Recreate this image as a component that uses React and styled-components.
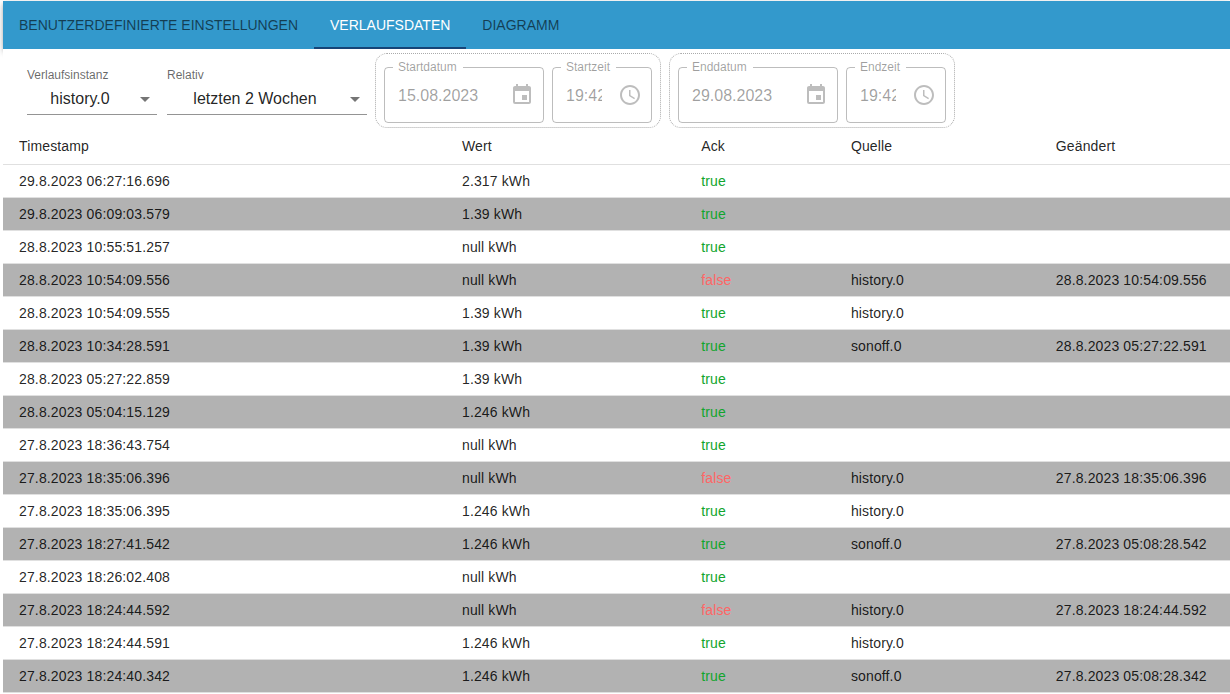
import React from 'react';
import styled, { createGlobalStyle } from 'styled-components';
import { MdAccessTime, MdArrowDropDown, MdEvent } from 'react-icons/md';

const GlobalStyle = createGlobalStyle`
    * {
        box-sizing: border-box;
    }

    body {
        margin: 0;
        background: white;
        color: rgba(0, 0, 0, 0.87);
        font-family: "Liberation Sans", Arial, sans-serif;
        font-size: 14px;
    }

    button,
    input,
    select {
        font-family: inherit;
    }
`;

const Page = styled.div`
    padding: 1px 0 0 3px;
    overflow: hidden;
`;

const TabBar = styled.nav`
    display: flex;
    height: 48px;
    background: #3399cc;
    box-shadow: 0 2px 4px -1px rgba(0, 0, 0, 0.2), 0 4px 5px 0 rgba(0, 0, 0, 0.14),
        0 1px 10px 0 rgba(0, 0, 0, 0.12);
`;

const Tab = styled.button`
    padding: 2px 16px 0;
    border: 0;
    border-bottom: 2px solid ${props => (props.$active ? '#164477' : 'transparent')};
    background: none;
    color: ${props => (props.$active ? 'white' : 'rgba(0, 0, 0, 0.6)')};
    font-size: 14px;
    line-height: 20px;
    text-transform: uppercase;
    white-space: nowrap;
    cursor: pointer;
`;

const Content = styled.main`
    position: relative;
    background: white;
`;

const Toolbar = styled.div`
    display: flex;
    flex-wrap: wrap;
    align-items: center;
    gap: 8px;
    padding: 4px 0 0 24px;
`;

const Selects = styled.div`
    display: flex;
    gap: 10px;
`;

const SelectControl = styled.div`
    width: ${props => props.$width}px;
`;

const SelectLabel = styled.label`
    display: block;
    color: rgba(0, 0, 0, 0.6);
    font-size: 12px;
    line-height: 16px;
`;

const SelectBox = styled.div`
    position: relative;

    svg {
        position: absolute;
        right: 0;
        top: 4px;
        color: rgba(0, 0, 0, 0.54);
        pointer-events: none;
    }
`;

const Select = styled.select`
    appearance: none;
    display: block;
    width: 100%;
    height: 32px;
    padding: 0 24px 0 0;
    border: 0;
    border-bottom: 1px solid rgba(0, 0, 0, 0.42);
    border-radius: 0;
    background: none;
    color: rgba(0, 0, 0, 0.87);
    font-size: 16px;
    text-align-last: center;
`;

const DateGroup = styled.div`
    display: flex;
    gap: 8px;
    padding: 13px 8px 4px;
    border: 1px dotted #aaaaaa;
    border-radius: 12px;
`;

const Field = styled.div`
    position: relative;
    display: flex;
    align-items: center;
    gap: 16px;
    width: ${props => props.$width}px;
    height: 56px;
    padding: 0 9px 0 13px;
    border: 1px solid rgba(0, 0, 0, 0.26);
    border-radius: 4px;
`;

const FieldLabel = styled.label`
    position: absolute;
    top: -9px;
    left: 8px;
    padding: 0 6px 0 5px;
    background: white;
    color: rgba(0, 0, 0, 0.38);
    font-size: 12px;
    line-height: 16px;
`;

const FieldInput = styled.input`
    flex: 1;
    min-width: 0;
    padding: 2px 0 0;
    border: 0;
    background: none;
    color: rgba(0, 0, 0, 0.38);
    font-size: 16px;
`;

const IconButton = styled.button`
    display: flex;
    padding: 0;
    border: 0;
    background: none;
    color: rgba(0, 0, 0, 0.26);
`;

const Table = styled.table`
    width: 100%;
    table-layout: fixed;
    border-collapse: separate;
    border-spacing: 0;
    letter-spacing: 0.01em;
`;

const HeadCell = styled.th`
    width: ${props => props.$width};
    padding: 6px 16px;
    border-bottom: 1px solid #e0e0e0;
    font-weight: normal;
    line-height: 24px;
    text-align: left;
`;

const Row = styled.tr`
    &:nth-child(even) {
        background: #b2b2b2;
    }
`;

const Cell = styled.td`
    padding: 6px 16px;
    border-bottom: 1px solid #e0e0e0;
    color: ${props => props.$color || 'inherit'};
    line-height: 20px;
    white-space: nowrap;
`;

const tabs = ['Benutzerdefinierte Einstellungen', 'Verlaufsdaten', 'Diagramm'];

const columns = [
    { title: 'Timestamp', width: '36.1%' },
    { title: 'Wert', width: '19.5%' },
    { title: 'Ack', width: '12.2%' },
    { title: 'Quelle', width: '16.7%' },
    { title: 'Geändert', width: '15.5%' },
];

const rows = [
    { ts: '29.8.2023 06:27:16.696', val: '2.317', ack: true },
    { ts: '29.8.2023 06:09:03.579', val: '1.39', ack: true },
    { ts: '28.8.2023 10:55:51.257', val: 'null', ack: true },
    { ts: '28.8.2023 10:54:09.556', val: 'null', ack: false, from: 'history.0', lc: '28.8.2023 10:54:09.556' },
    { ts: '28.8.2023 10:54:09.555', val: '1.39', ack: true, from: 'history.0' },
    { ts: '28.8.2023 10:34:28.591', val: '1.39', ack: true, from: 'sonoff.0', lc: '28.8.2023 05:27:22.591' },
    { ts: '28.8.2023 05:27:22.859', val: '1.39', ack: true },
    { ts: '28.8.2023 05:04:15.129', val: '1.246', ack: true },
    { ts: '27.8.2023 18:36:43.754', val: 'null', ack: true },
    { ts: '27.8.2023 18:35:06.396', val: 'null', ack: false, from: 'history.0', lc: '27.8.2023 18:35:06.396' },
    { ts: '27.8.2023 18:35:06.395', val: '1.246', ack: true, from: 'history.0' },
    { ts: '27.8.2023 18:27:41.542', val: '1.246', ack: true, from: 'sonoff.0', lc: '27.8.2023 05:08:28.542' },
    { ts: '27.8.2023 18:26:02.408', val: 'null', ack: true },
    { ts: '27.8.2023 18:24:44.592', val: 'null', ack: false, from: 'history.0', lc: '27.8.2023 18:24:44.592' },
    { ts: '27.8.2023 18:24:44.591', val: '1.246', ack: true, from: 'history.0' },
    { ts: '27.8.2023 18:24:40.342', val: '1.246', ack: true, from: 'sonoff.0', lc: '27.8.2023 05:08:28.342' },
];

function SelectField({ id, label, value, width }) {
    return (
        <SelectControl $width={width}>
            <SelectLabel htmlFor={id}>{label}</SelectLabel>
            <SelectBox>
                <Select id={id} defaultValue={value}>
                    <option value={value}>{value}</option>
                </Select>
                <MdArrowDropDown size={24} />
            </SelectBox>
        </SelectControl>
    );
}

function PickerField({ id, label, value, width, icon: Icon }) {
    return (
        <Field $width={width}>
            <FieldLabel htmlFor={id}>{label}</FieldLabel>
            <FieldInput id={id} type="text" defaultValue={value} disabled />
            <IconButton type="button" aria-label={label} disabled>
                <Icon size={24} />
            </IconButton>
        </Field>
    );
}

export default function App() {
    return (
        <Page>
            <GlobalStyle />
            <TabBar>
                {tabs.map(tab => (
                    <Tab key={tab} type="button" $active={tab === 'Verlaufsdaten'}>
                        {tab}
                    </Tab>
                ))}
            </TabBar>
            <Content>
                <Toolbar>
                    <Selects>
                        <SelectField id="instance" label="Verlaufsinstanz" value="history.0" width={130} />
                        <SelectField id="relative" label="Relativ" value="letzten 2 Wochen" width={200} />
                    </Selects>
                    <DateGroup>
                        <PickerField id="startDate" label="Startdatum" value="15.08.2023" width={160} icon={MdEvent} />
                        <PickerField id="startTime" label="Startzeit" value="19:42" width={100} icon={MdAccessTime} />
                    </DateGroup>
                    <DateGroup>
                        <PickerField id="endDate" label="Enddatum" value="29.08.2023" width={160} icon={MdEvent} />
                        <PickerField id="endTime" label="Endzeit" value="19:42" width={100} icon={MdAccessTime} />
                    </DateGroup>
                </Toolbar>
                <Table>
                    <thead>
                        <tr>
                            {columns.map(column => (
                                <HeadCell key={column.title} $width={column.width}>
                                    {column.title}
                                </HeadCell>
                            ))}
                        </tr>
                    </thead>
                    <tbody>
                        {rows.map(row => (
                            <Row key={row.ts}>
                                <Cell>{row.ts}</Cell>
                                <Cell>{row.val} kWh</Cell>
                                <Cell $color={row.ack ? '#11a52d' : '#ff6666'}>{row.ack.toString()}</Cell>
                                <Cell>{row.from}</Cell>
                                <Cell>{row.lc}</Cell>
                            </Row>
                        ))}
                    </tbody>
                </Table>
            </Content>
        </Page>
    );
}
